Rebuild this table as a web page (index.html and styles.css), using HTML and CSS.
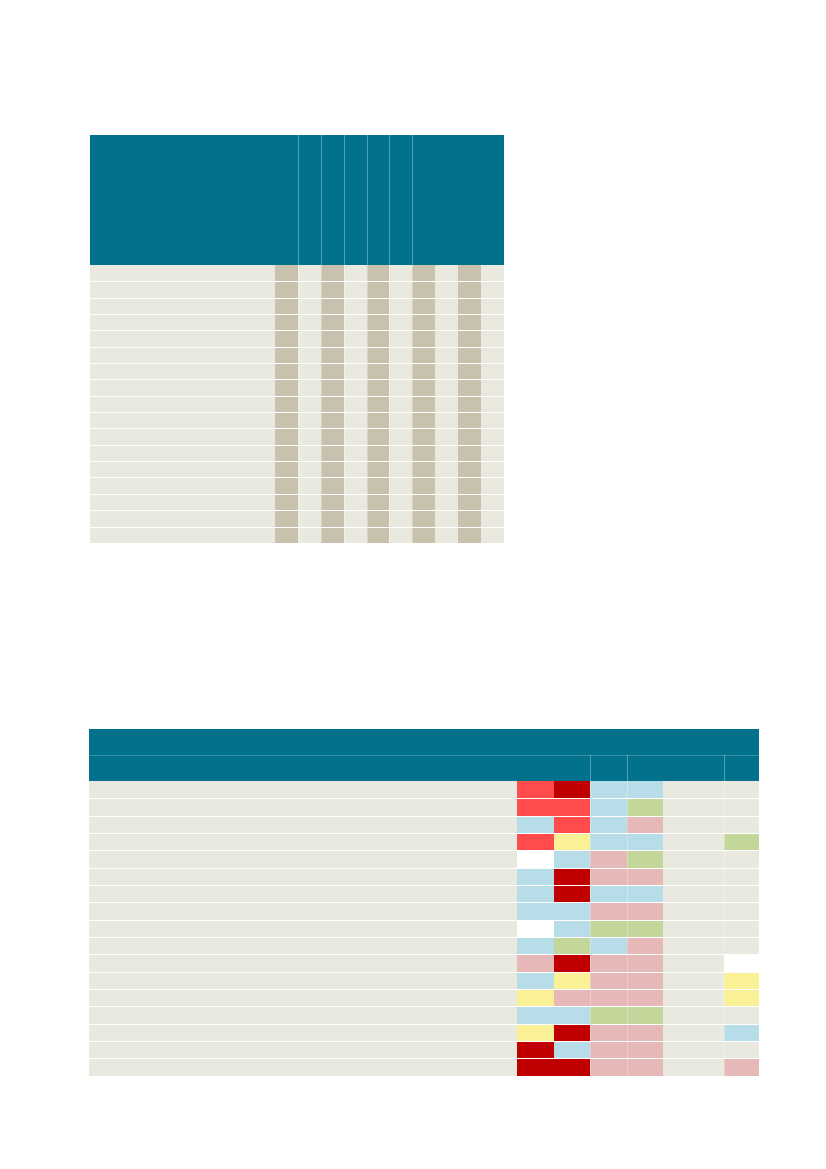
FILE: index.html
```html
<!DOCTYPE html>
<html lang="en">
<head>
<meta charset="utf-8">
<title>Tables</title>
<link rel="stylesheet" href="styles.css">
</head>
<body>
<main class="page">
  <section class="t1" aria-label="Table 1">
    <div class="t1-head">
      <div class="hc"></div><div class="hc"></div><div class="hc"></div><div class="hc"></div><div class="hc"></div><div class="hc"></div><div class="hc"></div>
    </div>
    <div class="t1-body">
      <div class="r1"><span></span><span></span><span></span><span></span><span></span><span></span><span></span><span></span><span></span><span></span><span></span></div>
      <div class="r1"><span></span><span></span><span></span><span></span><span></span><span></span><span></span><span></span><span></span><span></span><span></span></div>
      <div class="r1"><span></span><span></span><span></span><span></span><span></span><span></span><span></span><span></span><span></span><span></span><span></span></div>
      <div class="r1"><span></span><span></span><span></span><span></span><span></span><span></span><span></span><span></span><span></span><span></span><span></span></div>
      <div class="r1"><span></span><span></span><span></span><span></span><span></span><span></span><span></span><span></span><span></span><span></span><span></span></div>
      <div class="r1"><span></span><span></span><span></span><span></span><span></span><span></span><span></span><span></span><span></span><span></span><span></span></div>
      <div class="r1"><span></span><span></span><span></span><span></span><span></span><span></span><span></span><span></span><span></span><span></span><span></span></div>
      <div class="r1"><span></span><span></span><span></span><span></span><span></span><span></span><span></span><span></span><span></span><span></span><span></span></div>
      <div class="r1"><span></span><span></span><span></span><span></span><span></span><span></span><span></span><span></span><span></span><span></span><span></span></div>
      <div class="r1"><span></span><span></span><span></span><span></span><span></span><span></span><span></span><span></span><span></span><span></span><span></span></div>
      <div class="r1"><span></span><span></span><span></span><span></span><span></span><span></span><span></span><span></span><span></span><span></span><span></span></div>
      <div class="r1"><span></span><span></span><span></span><span></span><span></span><span></span><span></span><span></span><span></span><span></span><span></span></div>
      <div class="r1"><span></span><span></span><span></span><span></span><span></span><span></span><span></span><span></span><span></span><span></span><span></span></div>
      <div class="r1"><span></span><span></span><span></span><span></span><span></span><span></span><span></span><span></span><span></span><span></span><span></span></div>
      <div class="r1"><span></span><span></span><span></span><span></span><span></span><span></span><span></span><span></span><span></span><span></span><span></span></div>
      <div class="r1"><span></span><span></span><span></span><span></span><span></span><span></span><span></span><span></span><span></span><span></span><span></span></div>
      <div class="r1"><span></span><span></span><span></span><span></span><span></span><span></span><span></span><span></span><span></span><span></span><span></span></div>
    </div>
  </section>

  <section class="t2" aria-label="Table 2">
    <div class="t2-head1"></div>
    <div class="t2-head2">
      <div class="hc"></div><div class="hc"></div><div class="hc"></div><div class="hc"></div>
    </div>
    <div class="t2-body">
      <div class="r2"><span></span><span class="r"></span><span class="d"></span><span class="b"></span><span class="b"></span><span></span><span></span></div>
      <div class="r2"><span></span><span class="r"></span><span class="r"></span><span class="b"></span><span class="g"></span><span></span><span></span></div>
      <div class="r2"><span></span><span class="b"></span><span class="r"></span><span class="b"></span><span class="p"></span><span></span><span></span></div>
      <div class="r2"><span></span><span class="r"></span><span class="y"></span><span class="b"></span><span class="b"></span><span></span><span class="g"></span></div>
      <div class="r2"><span></span><span class="w"></span><span class="b"></span><span class="p"></span><span class="g"></span><span></span><span></span></div>
      <div class="r2"><span></span><span class="b"></span><span class="d"></span><span class="p"></span><span class="p"></span><span></span><span></span></div>
      <div class="r2"><span></span><span class="b"></span><span class="d"></span><span class="b"></span><span class="b"></span><span></span><span></span></div>
      <div class="r2"><span></span><span class="b"></span><span class="b"></span><span class="p"></span><span class="p"></span><span></span><span></span></div>
      <div class="r2"><span></span><span class="w"></span><span class="b"></span><span class="g"></span><span class="g"></span><span></span><span></span></div>
      <div class="r2"><span></span><span class="b"></span><span class="g"></span><span class="b"></span><span class="p"></span><span></span><span></span></div>
      <div class="r2"><span></span><span class="p"></span><span class="d"></span><span class="p"></span><span class="p"></span><span></span><span class="w"></span></div>
      <div class="r2"><span></span><span class="b"></span><span class="y"></span><span class="p"></span><span class="p"></span><span></span><span class="y"></span></div>
      <div class="r2"><span></span><span class="y"></span><span class="p"></span><span class="p"></span><span class="p"></span><span></span><span class="y"></span></div>
      <div class="r2"><span></span><span class="b"></span><span class="b"></span><span class="g"></span><span class="g"></span><span></span><span></span></div>
      <div class="r2"><span></span><span class="y"></span><span class="d"></span><span class="p"></span><span class="p"></span><span></span><span class="b"></span></div>
      <div class="r2"><span></span><span class="d"></span><span class="b"></span><span class="p"></span><span class="p"></span><span></span><span></span></div>
      <div class="r2"><span></span><span class="d"></span><span class="d"></span><span class="p"></span><span class="p"></span><span></span><span class="p"></span></div>
    </div>
  </section>
</main>
</body>
</html>
```

FILE: styles.css
```css
html, body {
  margin: 0;
  padding: 0;
  background: #ffffff;
  font-family: "Liberation Sans", Arial, sans-serif;
}

.page {
  display: flex;
  flex-direction: column;
  align-items: flex-start;
  padding-top: 135px;
}

/* ---------- Table 1 ---------- */
.t1 {
  margin-left: 90px;
  width: 414px;
  display: flex;
  flex-direction: column;
}

.t1-head {
  display: grid;
  grid-template-columns: 207.9px repeat(5, 22.9px) 91.6px;
  height: 130px;
  background: #02718b;
}

.t1-head .hc + .hc {
  box-shadow: inset 1px 0 rgba(255, 255, 255, 0.3);
}

.t1-body {
  display: flex;
  flex-direction: column;
}

.r1 {
  display: grid;
  grid-template-columns: 185px repeat(10, 22.9px);
  height: 16.35px;
  box-sizing: border-box;
}

.r1 + .r1 {
  border-top: 1px solid #ffffff;
}

.r1 span {
  background: #eae9df;
}

.r1 span:nth-child(even) {
  background: #c8c1ae;
}

.r1 span:nth-child(n+3):nth-child(-n+8) {
  box-shadow: inset 1px 0 rgba(255, 255, 255, 0.3);
}

/* ---------- Table 2 ---------- */
.t2 {
  margin-top: 186px;
  margin-left: 89px;
  width: 670px;
  display: flex;
  flex-direction: column;
}

.t2-head1 {
  height: 26px;
  background: #02718b;
}

.t2-head2 {
  display: grid;
  grid-template-columns: 501px 37px 97px 35px;
  height: 26px;
  background: #02718b;
  box-shadow: inset 0 1px rgba(255, 255, 255, 0.22);
}

.t2-head2 .hc + .hc {
  box-shadow: inset 1px 0 rgba(255, 255, 255, 0.3);
}

.t2-body {
  display: flex;
  flex-direction: column;
}

.r2 {
  display: grid;
  grid-template-columns: 428px 37px 36px 37px 36px 61px 35px;
  height: 17.35px;
  box-sizing: border-box;
}

.r2 + .r2 {
  border-top: 1px solid #ffffff;
}

.r2 span {
  background: #eae9df;
}

.r2 span:nth-child(4),
.r2 span:nth-child(5),
.r2 span:nth-child(7) {
  box-shadow: inset 1px 0 rgba(255, 255, 255, 0.3);
}

.r2 span.r { background: #ff4b4b; }
.r2 span.d { background: #c00000; }
.r2 span.b { background: #b7dee8; }
.r2 span.g { background: #c4d79b; }
.r2 span.p { background: #e6b8b7; }
.r2 span.y { background: #faf096; }
.r2 span.w { background: #ffffff; }
```
